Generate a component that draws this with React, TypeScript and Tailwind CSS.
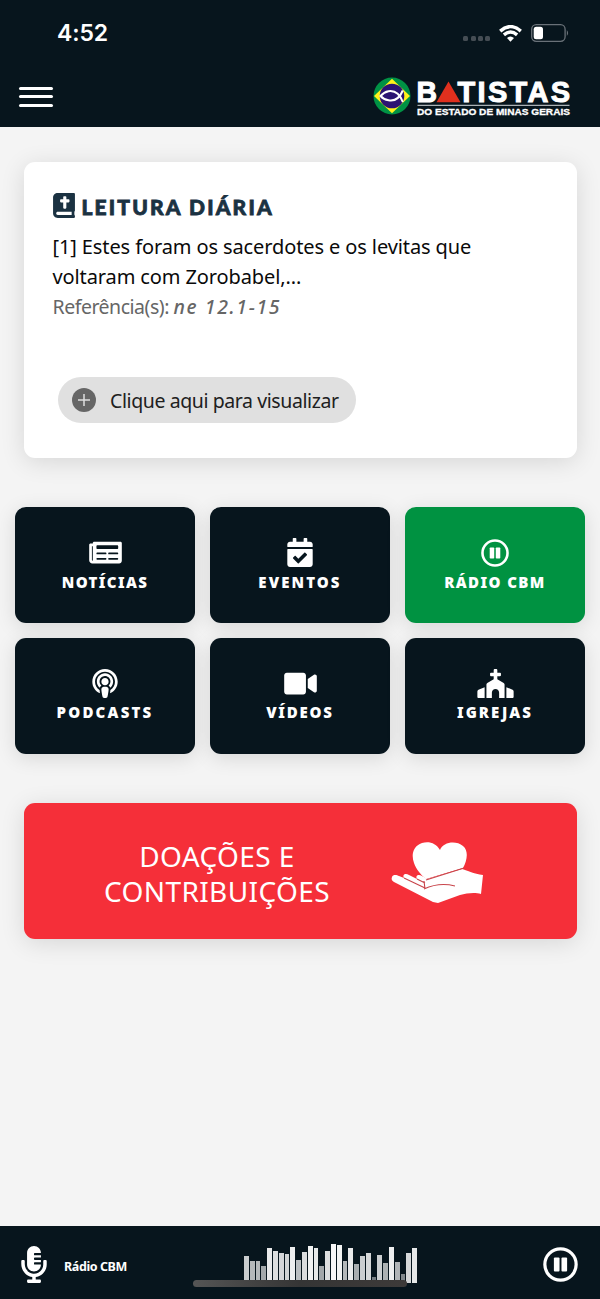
import {
  FaBible,
  FaCalendarCheck,
  FaChurch,
  FaMicrophoneAlt,
  FaNewspaper,
  FaPodcast,
  FaVideo,
} from "react-icons/fa"

const bars = [
  27.5, 22, 22, 17.5, 35.5, 32, 30, 29, 36.5, 23.5, 31.5, 37.5, 35, 17.5, 32, 39, 38, 22, 35.5, 19, 27.5, 30.5, 6, 28,
  20, 36.5, 21, 9, 30.5, 35,
]

function PauseCircle({ className }: { className: string }) {
  return (
    <svg viewBox="0 0 36 36" className={className} fill="none">
      <circle cx="18" cy="18" r="16.1" stroke="currentColor" strokeWidth="3.3" />
      <rect x="11.2" y="10.8" width="5.8" height="14.4" rx="1" fill="currentColor" />
      <rect x="19" y="10.8" width="5.8" height="14.4" rx="1" fill="currentColor" />
    </svg>
  )
}

const tiles = [
  { label: "NOTÍCIAS", spacing: "tracking-[1.4px]", icon: <FaNewspaper className="h-[29px] w-[33px]" /> },
  { label: "EVENTOS", spacing: "tracking-[2.1px]", icon: <FaCalendarCheck className="h-[29px] w-[26px]" /> },
  {
    label: "RÁDIO CBM",
    spacing: "tracking-[1.4px]",
    icon: <PauseCircle className="size-[28px]" />,
    active: true,
  },
  { label: "PODCASTS", spacing: "tracking-[2.2px]", icon: <FaPodcast className="h-[29px] w-[26px]" /> },
  { label: "VÍDEOS", spacing: "tracking-[1.8px]", icon: <FaVideo className="h-[29px] w-[33px]" /> },
  { label: "IGREJAS", spacing: "tracking-[2px]", icon: <FaChurch className="h-[29px] w-[37px]" /> },
]

function StatusBar() {
  return (
    <div className="flex h-[66px] items-center justify-between pl-[57px] pr-[31px]">
      <span className="font-['Inter',sans-serif] text-[23px] font-semibold leading-none tracking-[-0.1px]">4:52</span>
      <div className="flex items-center">
        <div className="mt-[11px] flex gap-[2.2px]">
          <i className="size-[5px] rounded-[1.5px] bg-[#454d54]" />
          <i className="size-[5px] rounded-[1.5px] bg-[#454d54]" />
          <i className="size-[5px] rounded-[1.5px] bg-[#454d54]" />
          <i className="size-[5px] rounded-[1.5px] bg-[#454d54]" />
        </div>
        <svg viewBox="0 0 23 17" className="ml-[9px] h-[17px] w-[23px]" fill="none" stroke="white" strokeWidth="3.4">
          <path d="M1.2 6.1Q11.5 -2.9 21.8 6.1" />
          <path d="M4.9 9.9Q11.5 4.2 18.1 9.9" />
          <path d="M8 13.1Q11.5 9.7 15 13.1L11.5 16.8Z" fill="white" stroke="none" />
        </svg>
        <svg viewBox="0 0 38 18" className="ml-[9px] h-[18px] w-[38px]">
          <rect x="0.7" y="0.7" width="33.4" height="16.6" rx="4.5" fill="none" stroke="#697178" strokeWidth="1.3" />
          <rect x="2.7" y="2.8" width="9.3" height="12.4" rx="2.5" fill="white" />
          <path d="M35.8 6Q38.4 9 35.8 12Z" fill="#697178" />
        </svg>
      </div>
    </div>
  )
}

function Logo() {
  return (
    <svg viewBox="0 0 200 42" className="h-[42px] w-[200px]">
      <circle cx="19" cy="21" r="18.5" fill="#009245" />
      <path d="M19 3.8L37 21L19 38.2L1 21Z" fill="#fff21a" />
      <circle cx="19" cy="21" r="12.3" fill="#2b1473" />
      <path
        d="M29.8 15.5C26.5 23.5 21 26.2 15.5 25.2Q10.5 24.4 7.5 21Q11 16.9 15.5 16.2C21 15.3 26.5 18.5 29.8 27"
        fill="none"
        stroke="white"
        strokeWidth="2"
      />
      <g
        fill="white"
        stroke="white"
        strokeWidth="1"
        fontFamily="Liberation Sans, sans-serif"
        fontWeight="bold"
        fontSize="29"
      >
        <text x="43.5" y="27" textLength="20.5" lengthAdjust="spacingAndGlyphs">
          B
        </text>
        <text x="84.5" y="27" textLength="112.5" lengthAdjust="spacing">
          TISTAS
        </text>
      </g>
      <path d="M75.5 6.5L87.5 27.3H63.5Z" fill="#e0301e" />
      <path d="M44.5 30.3H196.5" stroke="#d5d9dc" strokeWidth="1" />
      <text
        x="44"
        y="40"
        fill="white"
        fontFamily="Liberation Sans, sans-serif"
        fontWeight="bold"
        fontSize="9.4"
        stroke="white"
        strokeWidth="0.3"
        textLength="153"
        lengthAdjust="spacingAndGlyphs"
      >
        DO ESTADO DE MINAS GERAIS
      </text>
    </svg>
  )
}

function DailyReading() {
  return (
    <section className="mx-[23.5px] mt-[35px] h-[296px] rounded-[11px] bg-white px-[29px] pt-[30px] shadow-[0_4px_24px_rgba(0,0,0,0.12)]">
      <h2 className="flex h-[26px] items-center gap-[7px] text-[#1b3242]">
        <FaBible className="h-[25px] w-[22px]" />
        <span className="pt-[3px] font-['Lato',sans-serif] text-[21px] font-black leading-[26px] tracking-[2.15px] [-webkit-text-stroke:0.8px_#1b3242]">
          LEITURA DIÁRIA
        </span>
      </h2>
      <p className="mt-[13.5px] whitespace-nowrap text-[20px] leading-[30.5px] tracking-[-0.11px] text-[#0a0a0a]">
        [1] Estes foram os sacerdotes e os levitas que
        <br />
        voltaram com Zorobabel,...
      </p>
      <p className="-mt-px flex whitespace-pre text-[19.5px] leading-[29px] text-[#666]">
        <span className="tracking-[-0.48px]">Referência(s): </span>
        <em className="font-medium tracking-[1.6px]">ne 12.1-15</em>
      </p>
      <button className="ml-[5.5px] mt-[56px] flex h-[46px] w-[298px] items-center rounded-full bg-[#e0e0e0] pl-[14px] text-[#202020]">
        <svg viewBox="0 0 24 24" className="size-[24px]">
          <circle cx="12" cy="12" r="12" fill="#666" />
          <path d="M6 12H18M12 6V18" stroke="#e0e0e0" strokeWidth="1.5" />
        </svg>
        <span className="ml-[14px] whitespace-nowrap pt-[2px] text-[19.5px] tracking-[-0.41px]">
          Clique aqui para visualizar
        </span>
      </button>
    </section>
  )
}

function Donations() {
  return (
    <section className="mx-[23.5px] mt-[49px] flex h-[136px] items-center rounded-[11px] bg-[#f52f39] text-white shadow-[0_4px_24px_rgba(0,0,0,0.12)]">
      <p className="ml-[70.5px] w-[246px] pt-[7px] text-center text-[28px] leading-[35px] tracking-[0.4px]">
        DOAÇÕES E
        <br />
        CONTRIBUIÇÕES
      </p>
      <svg viewBox="0 0 94 64" className="ml-[50px] mt-[4px] h-[64px] w-[94px]">
        <path
          d="M50 9C46 2 39 0 32 2C23 5 21 14 24 22C26 28 31 34 36 38L73 27C77 20 79 10 73 5C66 -1 53 1 50 9Z"
          fill="white"
        />
        <path
          d="M2 36C3 33 7 34 9 35L14 37C12 33 16 32 19 34L27 38C25 34 29 33 32 35L37 38L72 28C76 29 84 33 93 34L91 53C85 51 77 52 70 54L48 62L43 61L4 41C2 40 1 38 2 36Z"
          fill="white"
        />
        <path
          d="M14 37L35 47M27 38L35 42M35 48L34 40M36 39L74 27M34 48Q49 41 65 45"
          fill="none"
          stroke="#c8444a"
          strokeWidth="1.1"
        />
      </svg>
    </section>
  )
}

function PlayerBar() {
  return (
    <footer className="relative mt-auto flex h-[73px] items-center bg-[#07151d] text-white">
      <FaMicrophoneAlt className="ml-[20.5px] mt-[4px] h-[37px] w-[26px]" />
      <span className="ml-[17.5px] mt-[10px] w-[80px] whitespace-nowrap text-[12.5px] font-bold tracking-[-0.4px]">
        Rádio CBM
      </span>
      <div className="ml-[100px] mt-[1px] flex h-[40px] w-[174px] items-end gap-[1px]">
        {bars.map((height, i) => (
          <i key={i} className="w-[4.8px] shrink-0 bg-white" style={{ height, opacity: 0.35 + (0.62 * height) / 39 }} />
        ))}
      </div>
      <PauseCircle className="ml-auto mr-[22px] mt-[4px] size-[35px]" />
      <div className="absolute bottom-[12px] left-[193px] h-[7px] w-[214px] rounded-full bg-gradient-to-r from-[#555] via-[#353535] to-[#3d3a39]" />
    </footer>
  )
}

export default function App() {
  return (
    <div className="flex h-[1299px] w-[600px] flex-col overflow-hidden bg-[#f4f4f4] font-['Noto_Sans',sans-serif]">
      <header className="h-[127.4px] shrink-0 bg-[#07151d] text-white">
        <StatusBar />
        <div className="flex justify-between pl-[19px] pr-[27px] pt-[9px]">
          <div className="mt-[11.5px] flex flex-col gap-[5.5px]">
            <span className="h-[3px] w-[34px] rounded-full bg-white" />
            <span className="h-[3px] w-[34px] rounded-full bg-white" />
            <span className="h-[3px] w-[34px] rounded-full bg-white" />
          </div>
          <Logo />
        </div>
      </header>

      <DailyReading />

      <nav className="mx-[14.75px] mt-[49px] grid grid-cols-3 gap-[14.5px]">
        {tiles.map((tile) => (
          <button
            key={tile.label}
            className={`flex h-[116px] flex-col items-center rounded-[11px] pt-[31px] text-white shadow-[0_4px_20px_rgba(0,0,0,0.12)] ${
              tile.active ? "bg-[#009241]" : "bg-[#07151d]"
            }`}
          >
            <span className="flex h-[29px] items-center">{tile.icon}</span>
            <span className={`mt-[4.5px] text-[15px] font-black leading-[20px] ${tile.spacing}`}>{tile.label}</span>
          </button>
        ))}
      </nav>

      <Donations />
      <PlayerBar />
    </div>
  )
}
